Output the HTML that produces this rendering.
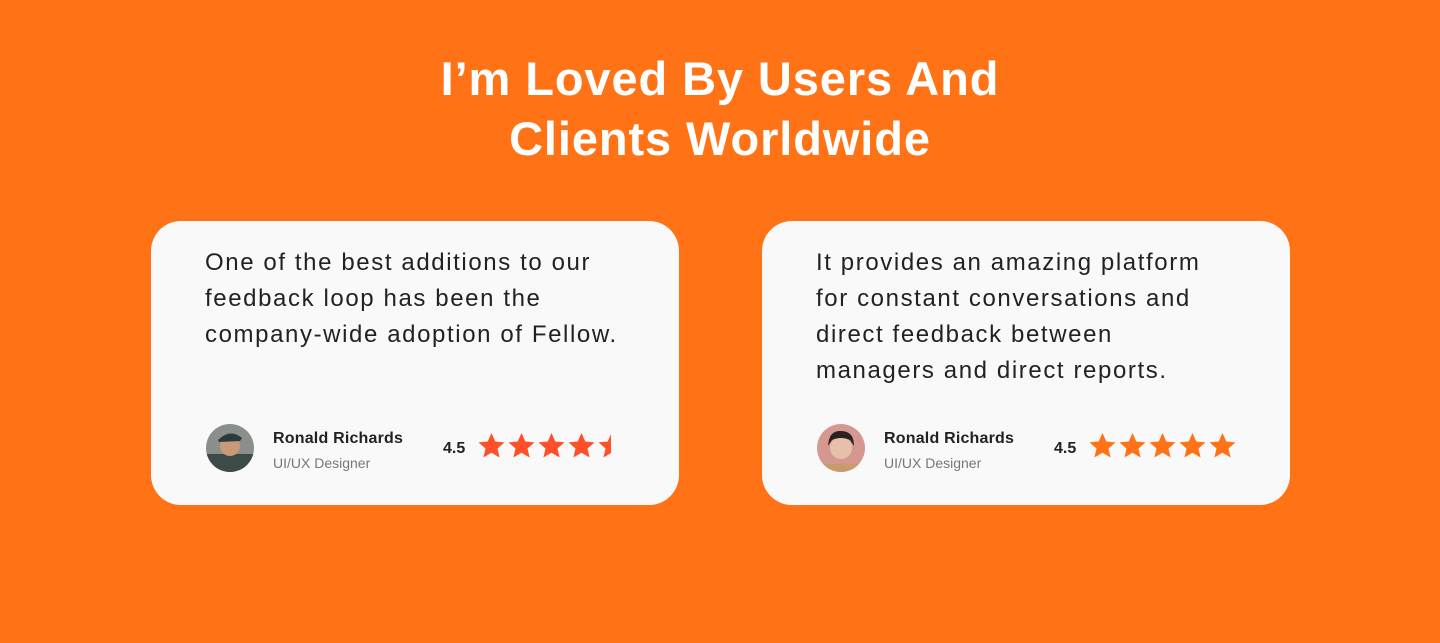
<!DOCTYPE html>
<html><head><style>
*{margin:0;padding:0;box-sizing:border-box}
body{width:1440px;height:643px;background:#FF7316;font-family:"Liberation Sans",sans-serif;position:relative;overflow:hidden}
h1{position:absolute;top:49px;left:0;width:1440px;text-align:center;color:#fff;font-size:47px;line-height:60px;font-weight:bold;letter-spacing:0.9px}
.card{position:absolute;top:221px;width:528px;height:284px;background:#F9F9F9;border-radius:30px}
.q{position:absolute;left:54px;top:24px;font-size:24px;line-height:36px;color:#222;letter-spacing:1.6px;white-space:nowrap}
.av{position:absolute;left:55px;top:203px;width:48px;height:48px;border-radius:50%;overflow:hidden}
.nm{position:absolute;left:122px;top:209px;font-size:16px;font-weight:bold;color:#222;letter-spacing:0.2px}
.rl{position:absolute;left:122px;top:234px;font-size:14px;color:#777}
.rt{position:absolute;left:292px;top:219px;font-size:16px;font-weight:bold;color:#222}
.st{position:absolute;left:327px;top:212px}
</style></head><body>
<h1>I’m Loved By Users And<br>Clients Worldwide</h1>
<div class="card" style="left:151px">
<div class="q">One of the best additions to our<br>feedback loop has been the<br>company-wide adoption of Fellow.</div>
<div class="av"><svg width="48" height="48"><rect width="48" height="48" fill="#8a8f8c"/><rect y="30" width="48" height="18" fill="#3c4a48"/><circle cx="24" cy="22" r="10" fill="#c99a7a"/><path d="M12 16 Q24 4 36 14 L34 17 L13 18Z" fill="#2b3a3a"/></svg></div>
<div class="nm">Ronald Richards</div><div class="rl">UI/UX Designer</div>
<div class="rt">4.5</div>
<svg class="st" width="135" height="28" viewBox="0 0 135 28"><defs><path id="s" d="M13.5 0l3.8 8.5 9.2.9-7 6.1 2.1 9L13.5 19.8 5.4 24.5l2.1-9-7-6.1 9.2-.9z"/><clipPath id="c"><rect width="133" height="28"/></clipPath></defs><g fill="#FF5029" clip-path="url(#c)"><use href="#s"/><use href="#s" x="30"/><use href="#s" x="60"/><use href="#s" x="90"/><use href="#s" x="120"/></g></svg>
</div>
<div class="card" style="left:762px">
<div class="q">It provides an amazing platform<br>for constant conversations and<br>direct feedback between<br>managers and direct reports.</div>
<div class="av"><svg width="48" height="48"><rect width="48" height="48" fill="#d49890"/><circle cx="24" cy="24" r="11" fill="#e7c0aa"/><path d="M11 22 Q12 6 24 7 Q37 7 37 22 L33 16 Q24 12 15 16Z" fill="#2a2220"/><rect y="40" width="48" height="8" fill="#c89a70"/></svg></div>
<div class="nm">Ronald Richards</div><div class="rl">UI/UX Designer</div>
<div class="rt">4.5</div>
<svg class="st" width="150" height="28" viewBox="0 0 150 28"><g fill="#FF7316"><use href="#s"/><use href="#s" x="30"/><use href="#s" x="60"/><use href="#s" x="90"/><use href="#s" x="120"/></g></svg>
</div>
</body></html>
